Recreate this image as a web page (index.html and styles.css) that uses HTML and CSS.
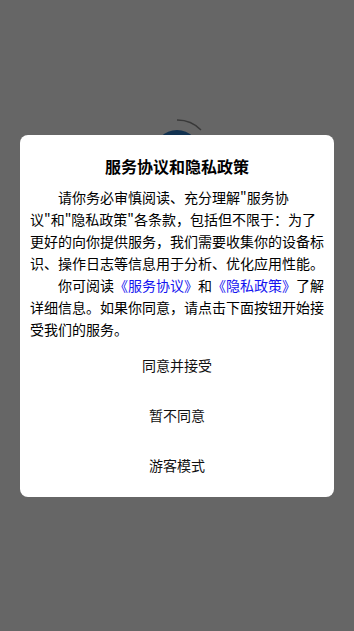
FILE: index.html
```html
<!DOCTYPE html>
<html lang="zh-CN">
<head>
    <meta charset="UTF-8">
    <meta name="viewport" content="width=device-width, initial-scale=1.0">
    <title>服务协议和隐私政策</title>
    <link rel="stylesheet" href="styles.css">
</head>
<body>
    <div class="splash">
        <svg class="splash-logo" width="80" height="80" viewBox="0 0 80 80">
            <circle cx="40" cy="40" r="23" fill="#2f7dc8"/>
            <path d="M40 7 A33 33 0 0 1 64 17" fill="none" stroke="#8e8e8e" stroke-width="1.5"/>
        </svg>
    </div>

    <div class="overlay">
        <div class="dialog">
            <div class="dialog-title">服务协议和隐私政策</div>
            <div class="dialog-body">
                <p>请你务必审慎阅读、充分理解"服务协议"和"隐私政策"各条款，包括但不限于：为了更好的向你提供服务，我们需要收集你的设备标识、操作日志等信息用于分析、优化应用性能。</p>
                <p>你可阅读<a href="#" class="link">《服务协议》</a>和<a href="#" class="link">《隐私政策》</a>了解详细信息。如果你同意，请点击下面按钮开始接受我们的服务。</p>
            </div>
            <div class="dialog-actions">
                <button class="action">同意并接受</button>
                <button class="action">暂不同意</button>
                <button class="action">游客模式</button>
            </div>
        </div>
    </div>
</body>
</html>
```
FILE: styles.css
```css
* {
    margin: 0;
    padding: 0;
    box-sizing: border-box;
}

body {
    font-family: "Noto Sans CJK SC", "Noto Sans", sans-serif;
    background: #ffffff;
    color: #000000;
    height: 100vh;
    overflow: hidden;
}

.splash {
    height: 100%;
    display: flex;
    justify-content: center;
    padding-top: 113px;
}

.splash-logo {
    display: block;
}

.overlay {
    position: fixed;
    inset: 0;
    background: rgba(0, 0, 0, 0.6);
    display: flex;
    align-items: center;
    justify-content: center;
    padding: 0 20px;
}

.dialog {
    width: 100%;
    background: #ffffff;
    border-radius: 8px;
    padding: 20px 10px 7px;
}

.dialog-title {
    text-align: center;
    font-size: 16px;
    font-weight: 700;
    line-height: 22px;
    margin-bottom: 9px;
}

.dialog-body {
    font-size: 14px;
    line-height: 22px;
}

.dialog-body p {
    text-indent: 2em;
}

.link {
    color: #1414f0;
    text-decoration: none;
}

.dialog-actions {
    display: flex;
    flex-direction: column;
}

.action {
    height: 50px;
    border: none;
    background: transparent;
    font-family: inherit;
    font-size: 14px;
    color: #111111;
    cursor: pointer;
}
```
